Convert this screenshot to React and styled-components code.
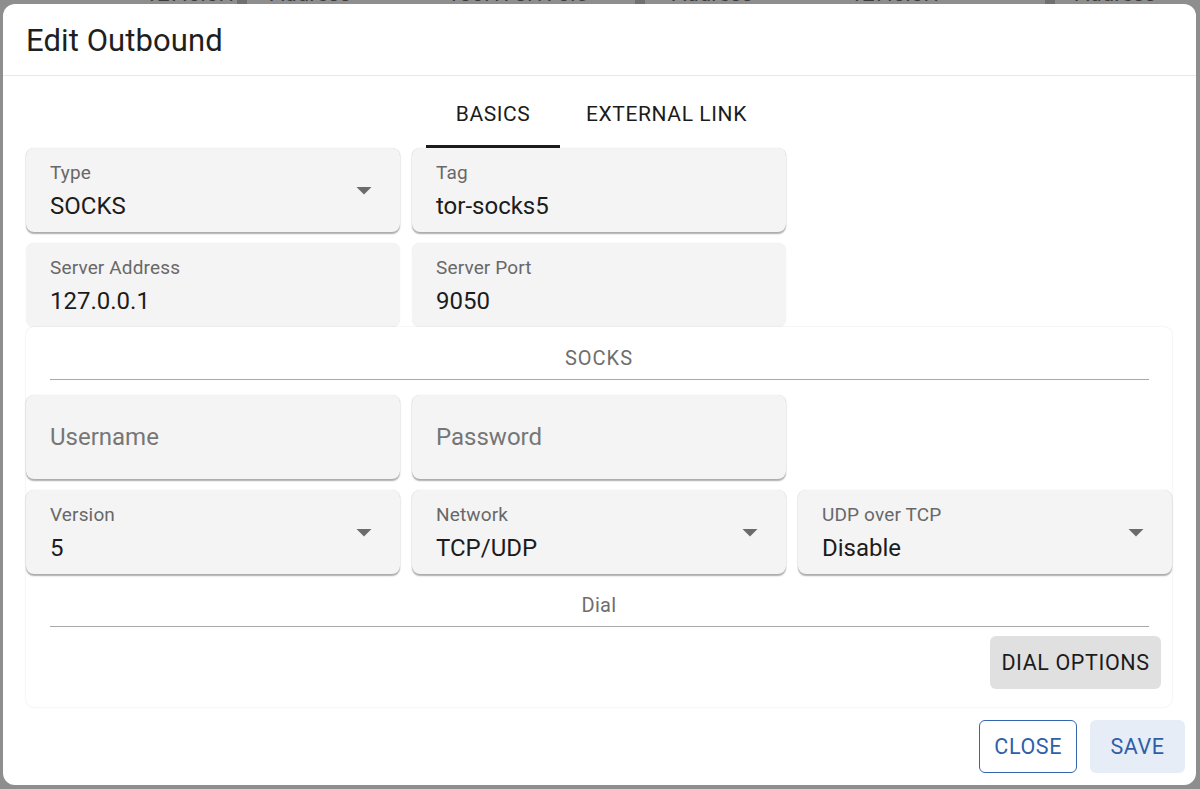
import React from 'react';
import styled, { createGlobalStyle } from 'styled-components';

const GlobalStyle = createGlobalStyle`
    body {
        margin: 0;
        background: #8e8e8e;
        font-family: Roboto, "Liberation Sans", Arial, sans-serif;
    }
`;

const Behind = styled.div`
    height: 4px;
    overflow: hidden;
    display: flex;
    color: #3c3c3c;
    font-size: 22px;
    line-height: 26px;
`;

const BehindCell = styled.div`
    width: ${props => props.w}px;
    flex-shrink: 0;
    margin-top: -19px;
    padding-left: ${props => props.pad || 0}px;
    border-left: ${props => props.bar ? '10px solid #707070' : 'none'};
    box-sizing: border-box;
`;

const Dialog = styled.div`
    margin: 0 4px 4px 3px;
    height: 781px;
    background: #fff;
    border-radius: 12px;
    display: flex;
    flex-direction: column;
    overflow: hidden;
`;

const Title = styled.h2`
    margin: 0;
    height: 71px;
    line-height: 74px;
    padding: 0 23px;
    font-size: 31px;
    font-weight: 400;
    color: #1f1f1f;
    letter-spacing: 0.1px;
    border-bottom: 1px solid #e8e8e8;
`;

const Tabs = styled.div`
    display: flex;
    justify-content: center;
    height: 72px;
`;

const Tab = styled.div`
    min-width: 134px;
    box-sizing: border-box;
    padding: 7px 26px 0;
    display: flex;
    align-items: center;
    justify-content: center;
    font-size: 21px;
    font-weight: 400;
    letter-spacing: 0.6px;
    color: #1c1c1c;
    border-bottom: 3px solid ${props => props.active ? '#1c1c1c' : 'transparent'};
`;

const Body = styled.div`
    padding: 0 24px 0 23px;
`;

const Grid = styled.div`
    display: grid;
    grid-template-columns: repeat(3, 1fr);
    gap: 11px 12px;
`;

const Field = styled.div`
    height: 84px;
    box-sizing: border-box;
    background: #f4f4f4;
    border-radius: 8px;
    box-shadow: ${props => props.flat ? '0 0 1px rgba(0,0,0,0.12)' : '0 1.5px 1.5px rgba(0,0,0,0.32), 0 0 1px rgba(0,0,0,0.14)'};
    display: flex;
    align-items: center;
    padding-left: 24px;
`;

const FieldText = styled.div`
    flex: 1;
    align-self: flex-start;
    padding-top: 13px;
`;

const Label = styled.div`
    font-size: 19px;
    line-height: 23px;
    color: #686868;
    letter-spacing: 0.15px;
`;

const Value = styled.div`
    margin-top: 8px;
    font-size: 24px;
    line-height: 28px;
    color: #1c1c1c;
`;

const Placeholder = styled.div`
    font-size: 24px;
    color: #767676;
`;

const Arrow = styled.svg`
    width: 36px;
    height: 36px;
    margin-right: 18px;
    fill: #6b6b6b;
`;

const Card = styled.div`
    position: relative;
    background: #fff;
    border-radius: 8px;
    box-shadow: 0 0 2px rgba(0,0,0,0.12);
    padding: 19px 0 18px;
    display: flex;
    flex-direction: column;
`;

const SectionLabel = styled.div`
    text-align: center;
    font-size: 20px;
    line-height: 24px;
    color: #6e6e6e;
    letter-spacing: ${props => props.wide ? '1px' : '0.3px'};
    margin-top: ${props => props.top || 0}px;
`;

const Rule = styled.hr`
    border: none;
    height: 1px;
    background: #a9a9a9;
    margin: 9px 23px ${props => props.after || 0}px 24px;
`;

const GreyButton = styled.button`
    align-self: flex-end;
    margin: 9px 11px 0 0;
    height: 53px;
    width: 171px;
    padding: 0;
    border: none;
    border-radius: 6px;
    background: #e0e0e0;
    font-family: inherit;
    font-size: 21.5px;
    font-weight: 400;
    letter-spacing: 0.6px;
    color: #1c1c1c;
`;

const Footer = styled.div`
    display: flex;
    justify-content: flex-end;
    gap: 13px;
    padding: 13px 11px 12px;
`;

const ActionButton = styled.button`
    min-width: ${props => props.outlined ? 97 : 95}px;
    height: 53px;
    padding: 0 14px;
    box-sizing: border-box;
    border-radius: 6px;
    border: ${props => props.outlined ? '1.5px solid #3565ad' : 'none'};
    background: ${props => props.outlined ? '#fff' : '#e7edf7'};
    color: #2f5fa9;
    font-family: inherit;
    font-size: 21.5px;
    font-weight: 400;
    letter-spacing: 0.6px;
`;

const DropArrow = () => (
    <Arrow viewBox="0 0 24 24">
        <path d="M7 10l5 5 5-5z" />
    </Arrow>
);

const InputField = ({label, value, select, placeholder, flat}) => (
    <Field flat={flat}>
        {placeholder ? (
            <Placeholder>{placeholder}</Placeholder>
        ) : (
            <FieldText>
                <Label>{label}</Label>
                <Value>{value}</Value>
            </FieldText>
        )}
        {select && <DropArrow />}
    </Field>
);

const behind = [
    {w: 145, text: ''},
    {w: 92, text: '127.0.0.1'},
    {w: 210, text: 'Address', bar: true, pad: 23},
    {w: 188, text: '183.178.170.5'},
    {w: 215, text: 'Address', bar: true, pad: 27},
    {w: 195, text: '127.0.0.1'},
    {w: 155, text: 'Address', bar: true, pad: 20},
];

export default function App() {
    return (
        <>
            <GlobalStyle />
            <Behind>
                {behind.map((c, i) => (
                    <BehindCell key={i} w={c.w} bar={c.bar} pad={c.pad}>{c.text}</BehindCell>
                ))}
            </Behind>
            <Dialog>
                <Title>Edit Outbound</Title>
                <Tabs>
                    <Tab active>BASICS</Tab>
                    <Tab>EXTERNAL LINK</Tab>
                </Tabs>
                <Body>
                    <Grid>
                        <InputField label="Type" value="SOCKS" select />
                        <InputField label="Tag" value="tor-socks5" />
                        <div />
                        <InputField label="Server Address" value="127.0.0.1" flat />
                        <InputField label="Server Port" value="9050" flat />
                    </Grid>
                    <Card>
                        <SectionLabel wide>SOCKS</SectionLabel>
                        <Rule after={15} />
                        <Grid>
                            <InputField placeholder="Username" />
                            <InputField placeholder="Password" />
                            <div />
                            <InputField label="Version" value="5" select />
                            <InputField label="Network" value="TCP/UDP" select />
                            <InputField label="UDP over TCP" value="Disable" select />
                        </Grid>
                        <SectionLabel top={19}>Dial</SectionLabel>
                        <Rule />
                        <GreyButton>DIAL OPTIONS</GreyButton>
                    </Card>
                </Body>
                <Footer>
                    <ActionButton outlined>CLOSE</ActionButton>
                    <ActionButton>SAVE</ActionButton>
                </Footer>
            </Dialog>
        </>
    );
}
